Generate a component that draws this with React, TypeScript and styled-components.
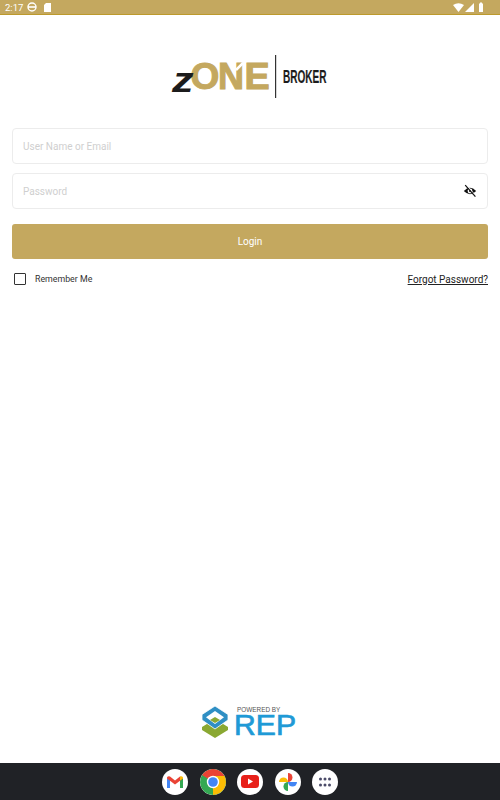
import styled, { createGlobalStyle } from "styled-components";

const GlobalStyle = createGlobalStyle`
  html, body {
    margin: 0;
    padding: 0;
    background: #ffffff;
    font-family: Roboto, "Liberation Sans", sans-serif;
  }
  * {
    box-sizing: border-box;
  }
`;

const Screen = styled.div`
  width: 500px;
  height: 800px;
  display: flex;
  flex-direction: column;
  overflow: hidden;
`;

const StatusBar = styled.div`
  height: 15px;
  flex: none;
  display: flex;
  align-items: center;
  justify-content: space-between;
  padding: 0 16px 0 5px;
  background: #c4a85f;
  border-bottom: 1px solid #bd9a2c;
  color: #ffffff;
  font-size: 9.5px;
`;

const StatusGroup = styled.div<{ $gap: number }>`
  display: flex;
  align-items: center;
  gap: ${(props) => props.$gap}px;
`;

const Main = styled.main`
  flex: 1;
  display: flex;
  flex-direction: column;
  padding: 39px 12px 0;
`;

const LogoRow = styled.div`
  height: 46px;
  display: flex;
  justify-content: center;
  margin-bottom: 28px;
`;

const Field = styled.div`
  height: 36px;
  flex: none;
  display: flex;
  align-items: center;
  justify-content: space-between;
  padding: 0 10px;
  margin-bottom: 9px;
  border: 1px solid #ececec;
  border-radius: 4px;
  background: #ffffff;
`;

const Placeholder = styled.span`
  font-size: 10px;
  color: #cfcfcf;
`;

const LoginButton = styled.button`
  height: 35px;
  flex: none;
  margin-top: 6px;
  border: none;
  border-radius: 3px;
  background: #c4a85f;
  color: #ffffff;
  font-family: inherit;
  font-size: 10px;
`;

const OptionsRow = styled.div`
  display: flex;
  align-items: center;
  justify-content: space-between;
  margin-top: 13px;
  height: 14px;
  padding-left: 2px;
`;

const Remember = styled.label`
  display: flex;
  align-items: center;
  gap: 9px;
  font-size: 8.8px;
  color: #333333;
`;

const CheckBox = styled.span`
  width: 12px;
  height: 12px;
  border: 1.5px solid #333333;
  border-radius: 1px;
`;

const ForgotLink = styled.a`
  font-size: 10px;
  color: #222222;
  text-decoration: underline;
`;

const Footer = styled.div`
  margin-top: auto;
  display: flex;
  justify-content: center;
  margin-bottom: 25px;
`;

const NavBar = styled.nav`
  height: 37px;
  flex: none;
  display: flex;
  align-items: center;
  justify-content: center;
  gap: 11.5px;
  background: #202226;
`;

const NavIcon = styled.div`
  width: 26px;
  height: 26px;
  border-radius: 50%;
  background: #ffffff;
  display: flex;
  align-items: center;
  justify-content: center;
  overflow: hidden;
`;

function ZoneLogo() {
  const letter = { fontFamily: "Liberation Sans", fontWeight: 700, fontSize: 36, fill: "#c4a85f", stroke: "#c4a85f", strokeWidth: 1 };
  return (
    <svg width="160" height="46" viewBox="0 0 160 46">
      <text {...letter} transform="translate(20.5 35) scale(1.03 1)">O</text>
      <text {...letter} transform="translate(48 35)">N</text>
      <text {...letter} transform="translate(74.5 35) scale(1.05 1)">E</text>
      <path d="M66 16 L73 9" stroke="#ffffff" strokeWidth="2.5" />
      <text fontFamily="Liberation Sans" fontWeight="700" fontStyle="italic" fontSize="36" fill="#1c1c1c" transform="translate(2 38) scale(1.2 1)">z</text>
      <rect x="105" y="1" width="1.2" height="43" fill="#333333" />
      <text fontFamily="Liberation Sans" fontWeight="700" fontSize="19" fill="#1c1c1c" stroke="#1c1c1c" strokeWidth="0.2" transform="translate(113 29) scale(0.53 1)">BROKER</text>
    </svg>
  );
}

function RepLogo() {
  return (
    <svg width="96" height="33" viewBox="0 0 96 33" overflow="visible">
      <path d="M13 14 L26 22 V25 L13 33 L0 25 V22 Z" fill="#8aa832" />
      <path d="M13 1 L26 9.5 V15 L13 24 L0 15 V9.5 Z" fill="#2f8fc4" stroke="#ffffff" strokeWidth="0.8" />
      <path d="M13 6 L22 12.2 L13 19 L4 12.2 Z" fill="#ffffff" />
      <path d="M13 12 L18 15 L13 18 L8 15 Z" fill="#8aa832" />
      <text x="35" y="7" fontFamily="Liberation Sans" fontSize="6.4" fill="#555555">POWERED BY</text>
      <text fontFamily="Liberation Sans" fontSize="29" fill="#1f9ad6" stroke="#1f9ad6" strokeWidth="0.7" transform="translate(32 30) scale(1.04 1)">REP</text>
    </svg>
  );
}

function EyeOffIcon() {
  return (
    <svg width="14" height="14" viewBox="0 0 14 14">
      <path d="M0.8 7 Q7 0.6 13.2 7 Q7 13.4 0.8 7 Z" fill="#111111" />
      <circle cx="7" cy="7" r="2.4" fill="#ffffff" />
      <circle cx="7" cy="7" r="1" fill="#111111" />
      <path d="M2.2 1.2 L12.4 12.6" stroke="#ffffff" strokeWidth="1" transform="translate(0.7 -0.6)" />
      <path d="M2.2 1.2 L12.4 12.6" stroke="#111111" strokeWidth="1.2" />
    </svg>
  );
}

function GmailIcon() {
  return (
    <svg width="16" height="12" viewBox="0 0 16 12">
      <path d="M0 12 V2 L3 4 V12 Z" fill="#4285f4" />
      <path d="M13 12 V4 L16 2 V12 Z" fill="#34a853" />
      <path d="M0 2.5 L8 8.5 L16 2.5 L13 0.5 L8 4.5 L3 0.5 A2 2 0 0 0 0 2.5 Z" fill="#ea4335" />
      <path d="M13 4.5 L16 2.5 A2 2 0 0 0 13 0.5 Z" fill="#fbbc04" />
    </svg>
  );
}

function ChromeIcon() {
  return (
    <svg width="26" height="26" viewBox="0 0 26 26">
      <circle cx="13" cy="13" r="13" fill="#34a853" />
      <path d="M13 13 L2 6 A13 13 0 0 1 24.5 7 Z" fill="#ea4335" />
      <path d="M13 7 H24.5 A13 13 0 0 1 13 26 Z" fill="#fbbc04" />
      <circle cx="13" cy="13" r="6.2" fill="#ffffff" />
      <circle cx="13" cy="13" r="4.8" fill="#4285f4" />
    </svg>
  );
}

function YoutubeIcon() {
  return (
    <svg width="18" height="13" viewBox="0 0 18 13">
      <rect width="18" height="13" rx="3.5" fill="#e8201a" />
      <path d="M7 3.5 L12 6.5 L7 9.5 Z" fill="#ffffff" />
    </svg>
  );
}

function PhotosIcon() {
  return (
    <svg width="20" height="20" viewBox="0 0 20 20">
      <path d="M10 10 H1 A4.5 4.5 0 0 1 10 10 Z" fill="#fbbc04" />
      <path d="M10 10 V1 A4.5 4.5 0 0 1 10 10 Z" fill="#ea4335" />
      <path d="M10 10 H19 A4.5 4.5 0 0 1 10 10 Z" fill="#4285f4" />
      <path d="M10 10 V19 A4.5 4.5 0 0 1 10 10 Z" fill="#34a853" />
    </svg>
  );
}

function AppsIcon() {
  const dots = [0, 1].flatMap((row) => [0, 1, 2].map((col) => ({ row, col })));
  return (
    <svg width="14" height="10" viewBox="0 0 14 10">
      {dots.map(({ row, col }) => (
        <circle key={`${row}-${col}`} cx={2.5 + col * 4.5} cy={2 + row * 6} r="1.5" fill="#4a4a68" />
      ))}
    </svg>
  );
}

export default function App() {
  return (
    <>
      <GlobalStyle />
      <Screen>
        <StatusBar>
          <StatusGroup $gap={4}>
            <span>2:17</span>
            <svg width="10" height="10" viewBox="0 0 10 10">
              <circle cx="5" cy="5" r="4" fill="none" stroke="#fff" strokeWidth="1.4" />
              <rect x="1" y="4.2" width="8" height="1.6" fill="#fff" />
            </svg>
            <svg width="7" height="9" viewBox="0 0 7 9" style={{ marginLeft: 3 }}>
              <path d="M2 0 H7 V9 H0 V2 Z" fill="#fff" />
            </svg>
          </StatusGroup>
          <StatusGroup $gap={1}>
            <svg width="11" height="9" viewBox="0 0 11 9">
              <path d="M0 2 Q5.5 -1.5 11 2 L5.5 9 Z" fill="#fff" />
            </svg>
            <svg width="9" height="9" viewBox="0 0 9 9">
              <path d="M9 0 V9 H0 Z" fill="#fff" />
            </svg>
            <svg width="6" height="10" viewBox="0 0 6 10" style={{ marginLeft: 3 }}>
              <path d="M1 1.5 H2 V0.5 H4 V1.5 H5 V10 H1 Z" fill="#fff" />
            </svg>
          </StatusGroup>
        </StatusBar>
        <Main>
          <LogoRow>
            <ZoneLogo />
          </LogoRow>
          <Field>
            <Placeholder>User Name or Email</Placeholder>
          </Field>
          <Field>
            <Placeholder>Password</Placeholder>
            <EyeOffIcon />
          </Field>
          <LoginButton>Login</LoginButton>
          <OptionsRow>
            <Remember>
              <CheckBox />
              Remember Me
            </Remember>
            <ForgotLink>Forgot Password?</ForgotLink>
          </OptionsRow>
          <Footer>
            <RepLogo />
          </Footer>
        </Main>
        <NavBar>
          <NavIcon><GmailIcon /></NavIcon>
          <NavIcon><ChromeIcon /></NavIcon>
          <NavIcon><YoutubeIcon /></NavIcon>
          <NavIcon><PhotosIcon /></NavIcon>
          <NavIcon><AppsIcon /></NavIcon>
        </NavBar>
      </Screen>
    </>
  );
}
